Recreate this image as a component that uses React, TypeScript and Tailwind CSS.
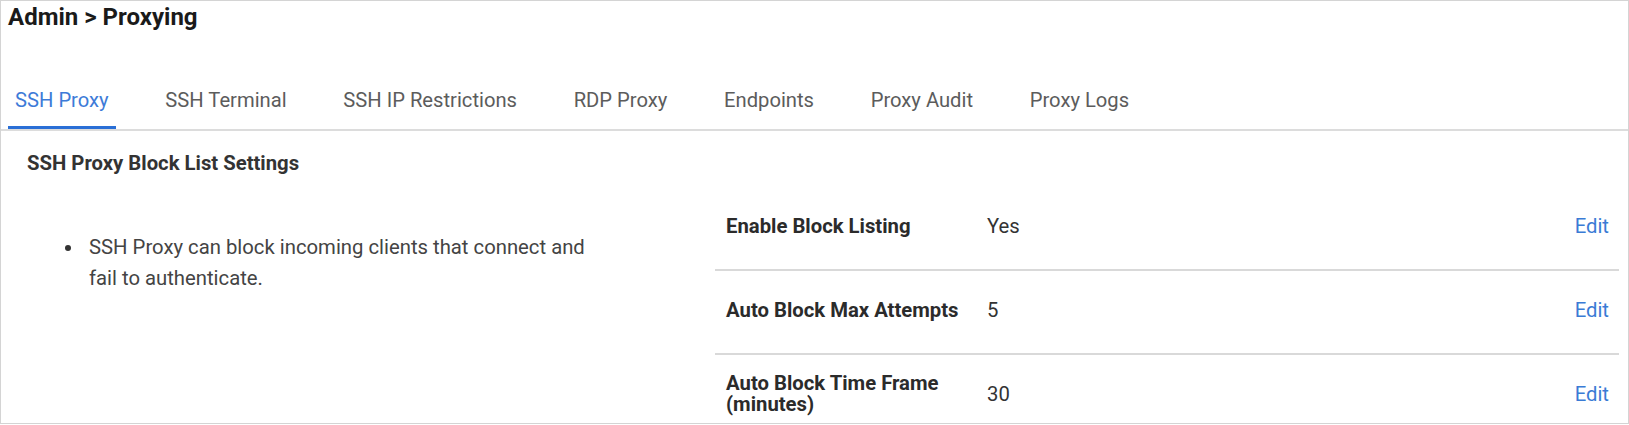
import React from "react";

const tabs = [
  "SSH Proxy",
  "SSH Terminal",
  "SSH IP Restrictions",
  "RDP Proxy",
  "Endpoints",
  "Proxy Audit",
  "Proxy Logs",
];

const settings = [
  { label: "Enable Block Listing", value: "Yes" },
  { label: "Auto Block Max Attempts", value: "5" },
  { label: "Auto Block Time Frame (minutes)", value: "30" },
];

export default function App() {
  return (
    <div className="h-[425px] w-[1629px] bg-white font-['Roboto',_'Liberation_Sans',_sans-serif]">
      <div className="h-[424px] overflow-hidden border border-[#d4d4d4]">
        {/* Breadcrumb */}
        <h1 className="pl-[7px] pt-[2px] text-[24px] font-bold leading-[28px] text-[#1a1a1a]">
          Admin &gt; Proxying
        </h1>

        {/* Tabs */}
        <div className="mt-[57px] flex items-end gap-[42.7px] border-b-2 border-[#dcdcdc] pl-[7px]">
          {tabs.map((t, i) => (
            <button
              key={t}
              className={
                i === 0
                  ? "border-b-[3px] border-[#2a6fd6] px-[7px] pb-[14px] text-[20.2px] leading-[24px] text-[#3d7bd8]"
                  : "border-b-[3px] border-transparent px-[7px] pb-[14px] text-[20.2px] leading-[24px] text-[#5c5c5c]"
              }
            >
              {t}
            </button>
          ))}
        </div>

        {/* Section */}
        <h2 className="pl-[26px] pt-[20px] text-[20.3px] font-bold leading-[24px] text-[#333333]">
          SSH Proxy Block List Settings
        </h2>

        <div className="mt-[12px] flex">
          <div className="w-[714px] shrink-0">
            <div className="mt-[45px] flex items-start pl-[64px]">
              <span className="mt-[13px] h-[6px] w-[6px] shrink-0 rounded-full bg-[#333333]" />
              <p className="ml-[18px] w-[515px] text-[20.3px] leading-[31px] text-[#444444]">
                SSH Proxy can block incoming clients that connect and fail to authenticate.
              </p>
            </div>
          </div>

          <div className="mr-[9px] flex-1">
            {settings.map((s) => (
              <div
                key={s.label}
                className="flex h-[84px] items-center border-b-2 border-[#d9d9d9] pb-[4px] pl-[11px] pr-[10px]"
              >
                <div className="w-[261px] shrink-0 pr-[20px] text-[20.3px] font-bold leading-[21px] text-[#2b2b2b]">
                  {s.label}
                </div>
                <div className="flex-1 text-[20.3px] leading-[24px] text-[#333333]">{s.value}</div>
                <a className="text-[20.3px] leading-[24px] text-[#3a7bd5]">Edit</a>
              </div>
            ))}
          </div>
        </div>
      </div>
    </div>
  );
}
